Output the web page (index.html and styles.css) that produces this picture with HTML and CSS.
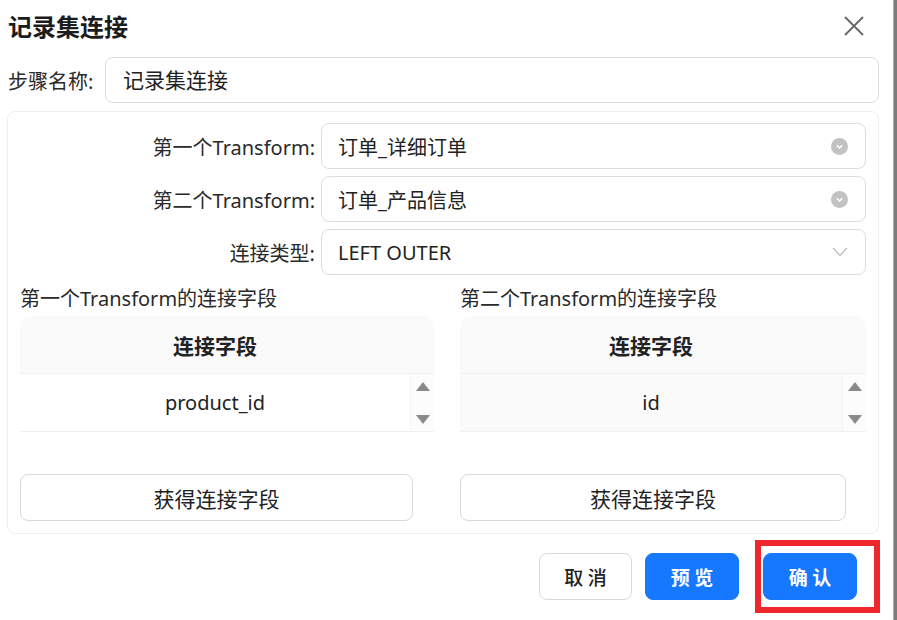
FILE: index.html
```html
<!DOCTYPE html>
<html lang="zh-CN">
<head>
<meta charset="utf-8">
<title>记录集连接</title>
<link rel="stylesheet" href="styles.css">
</head>
<body>
<div class="page">
  <div class="dialog">
    <div class="header">
      <div class="title">记录集连接</div>
      <svg class="close" width="20" height="20" viewBox="0 0 20 20"><path d="M1 1L19 19M19 1L1 19" stroke="#666" stroke-width="1.8" fill="none"/></svg>
    </div>
    <div class="name-row">
      <label class="name-label">步骤名称:</label>
      <div class="input">记录集连接</div>
    </div>
    <div class="panel">
      <div class="form-row">
        <div class="form-label">第一个Transform:</div>
        <div class="select">
          <span>订单_详细订单</span>
          <svg class="clear" width="17" height="17" viewBox="0 0 17 17"><circle cx="8.5" cy="8.5" r="8.5" fill="#c2c2c2"/><path d="M5.8 7.3L8.5 10L11.2 7.3" stroke="#fff" stroke-width="1.6" fill="none"/></svg>
        </div>
      </div>
      <div class="form-row">
        <div class="form-label">第二个Transform:</div>
        <div class="select">
          <span>订单_产品信息</span>
          <svg class="clear" width="17" height="17" viewBox="0 0 17 17"><circle cx="8.5" cy="8.5" r="8.5" fill="#c2c2c2"/><path d="M5.8 7.3L8.5 10L11.2 7.3" stroke="#fff" stroke-width="1.6" fill="none"/></svg>
        </div>
      </div>
      <div class="form-row">
        <div class="form-label">连接类型:</div>
        <div class="select">
          <span>LEFT OUTER</span>
          <svg class="arrow" width="16" height="10" viewBox="0 0 16 10"><path d="M1 1L8 8.5L15 1" stroke="#bcbcbc" stroke-width="1.3" fill="none"/></svg>
        </div>
      </div>
      <div class="columns">
        <div class="col col-left">
          <div class="col-label">第一个Transform的连接字段</div>
          <div class="table">
            <div class="thead">连接字段</div>
            <div class="trow">
              <div class="cell">product_id</div>
              <div class="scroll">
                <svg width="14" height="9" viewBox="0 0 14 9"><path d="M7 0L14 9H0Z" fill="#8a8a8a"/></svg>
                <svg width="14" height="9" viewBox="0 0 14 9"><path d="M0 0H14L7 9Z" fill="#8a8a8a"/></svg>
              </div>
            </div>
          </div>
          <button class="btn-get">获得连接字段</button>
        </div>
        <div class="col col-right">
          <div class="col-label">第二个Transform的连接字段</div>
          <div class="table">
            <div class="thead">连接字段</div>
            <div class="trow">
              <div class="cell cell-hover">id</div>
              <div class="scroll">
                <svg width="14" height="9" viewBox="0 0 14 9"><path d="M7 0L14 9H0Z" fill="#8a8a8a"/></svg>
                <svg width="14" height="9" viewBox="0 0 14 9"><path d="M0 0H14L7 9Z" fill="#8a8a8a"/></svg>
              </div>
            </div>
          </div>
          <button class="btn-get btn-get-right">获得连接字段</button>
        </div>
      </div>
    </div>
    <div class="footer">
      <button class="btn btn-default">取 消</button>
      <button class="btn btn-primary">预 览</button>
      <button class="btn btn-primary btn-confirm">确 认</button>
      <div class="mark"></div>
    </div>
  </div>
  <div class="edge"></div>
</div>
</body>
</html>
```

FILE: styles.css
```css
* { box-sizing: border-box; }
html, body { margin: 0; padding: 0; background: #fff; }
body {
  font-family: "Noto Sans", "Noto Sans CJK SC", sans-serif;
  color: #222;
  width: 897px;
  height: 620px;
  overflow: hidden;
}
.page { display: flex; width: 897px; height: 620px; }
.dialog { width: 893px; height: 620px; display: flex; flex-direction: column; }
.edge { width: 4px; height: 620px; background: #7c7c7c; border-left: 1px solid #b0b0b0; }

.header {
  height: 52px;
  display: flex;
  align-items: center;
  justify-content: space-between;
  padding: 0 29px 0 8px;
}
.title { font-family: "Noto Sans CJK SC", sans-serif; font-size: 24px; font-weight: 700; color: #1c1c1c; line-height: 30px; }
.close { display: block; }

.name-row {
  margin-top: 5px;
  display: flex;
  align-items: center;
  padding-left: 8px;
}
.name-label { font-size: 20px; width: 97px; color: #2a2a2a; }
.input {
  width: 774px;
  height: 46px;
  border: 1px solid #dcdcdc;
  border-radius: 8px;
  font-size: 21px;
  line-height: 44px;
  padding-left: 17px;
  color: #222;
}

.panel {
  margin: 8px 0 0 7px;
  width: 872px;
  height: 423px;
  flex-shrink: 0;
  border: 1px solid #efefef;
  border-radius: 8px;
  padding: 11px 12px 0 12px;
}
.form-row { display: flex; align-items: center; margin-bottom: 7px; }
.form-label { width: 301px; text-align: right; font-size: 20px; padding-right: 6px; color: #2a2a2a; white-space: nowrap; }
.select {
  flex: 1;
  height: 46px;
  border: 1px solid #dedede;
  border-radius: 8px;
  display: flex;
  align-items: center;
  justify-content: space-between;
  padding: 0 17px 0 16px;
  font-size: 20px;
  color: #222;
}
.clear, .arrow { display: block; }

.columns { display: flex; gap: 26px; margin-top: 11px; }
.col { display: flex; flex-direction: column; }
.col-left { width: 414px; }
.col-right { width: 406px; }
.col-label { font-size: 20px; line-height: 26px; height: 30px; color: #2a2a2a; white-space: nowrap; }
.table { border-radius: 10px 10px 0 0; overflow: hidden; }
.thead {
  height: 58px;
  background: #fafafa;
  border-bottom: 1px solid #f0f0f0;
  font-family: "Noto Sans CJK SC", sans-serif;
  font-weight: 700;
  font-size: 21px;
  display: flex;
  align-items: center;
  justify-content: center;
  padding-right: 24px;
  color: #222;
}
.trow { display: flex; height: 58px; border-bottom: 1px solid #f0f0f0; }
.cell {
  flex: 1;
  display: flex;
  align-items: center;
  justify-content: center;
  font-size: 20px;
  background: #fff;
  color: #222;
}
.cell-hover { background: #fafafa; }
.scroll {
  width: 24px;
  background: #fcfcfc;
  border-left: 1px solid #f3f3f3;
  display: flex;
  flex-direction: column;
  align-items: center;
  justify-content: space-between;
  padding: 8px 0 7px;
}
.scroll svg { display: block; }

.btn-get {
  margin-top: 42px;
  width: 393px;
  height: 47px;
  border: 1px solid #d9d9d9;
  border-radius: 8px;
  background: #fff;
  font-family: "Noto Sans CJK SC", sans-serif;
  font-size: 21px;
  color: #222;
}
.btn-get-right { width: 386px; }

.footer {
  position: relative;
  margin-top: 19px;
  display: flex;
  justify-content: flex-end;
  padding-right: 36px;
}
.btn {
  height: 47px;
  width: 94px;
  border-radius: 8px;
  font-family: "Noto Sans CJK SC", sans-serif;
  font-size: 19px;
  font-weight: 700;
  border: 1px solid #d9d9d9;
  background: #fff;
  color: #222;
  margin-left: 13px;
}
.btn-default { width: 93px; font-weight: 500; }
.btn-primary { background: #1677ff; border-color: #1677ff; color: #fff; }
.btn-confirm { margin-left: 24px; }
.mark {
  position: absolute;
  left: 755px;
  top: -13px;
  width: 125px;
  height: 73px;
  border: 6px solid #f0262d;
}
```
